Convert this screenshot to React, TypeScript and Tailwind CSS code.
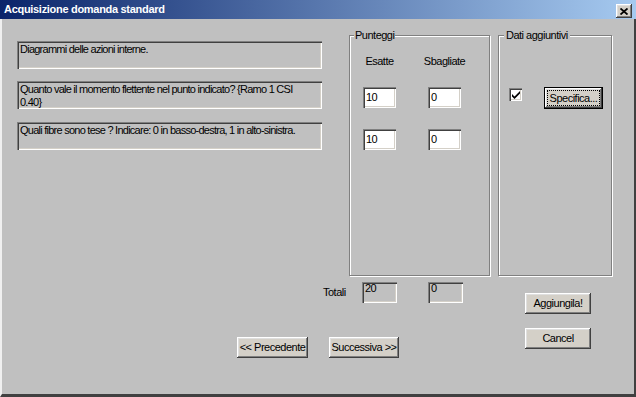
const sunken =
  "shadow-[inset_1px_1px_0_#808080,inset_2px_2px_0_#404040,inset_-1px_-1px_0_#ffffff,inset_-2px_-2px_0_#d4d0c8]"
const raised =
  "shadow-[inset_-1px_-1px_0_#404040,inset_1px_1px_0_#ffffff,inset_-2px_-2px_0_#808080,inset_2px_2px_0_#dfdfdf]"
const etched = "border border-[#808080] shadow-[inset_1px_1px_0_#ffffff,1px_1px_0_#ffffff]"

const Button = ({ label, className = "" }: { label: string; className?: string }) => (
  <button className={`bg-[#d4d0c8] ${raised} flex items-center justify-center ${className}`}>
    {label}
  </button>
)

const Field = ({ value, white = true }: { value: string; white?: boolean }) => (
  <div
    className={`${white ? "bg-white items-center" : "bg-[#c0c0c0] items-start"} ${sunken} flex pl-[3px] pt-0 h-[21px]`}
  >
    {value}
  </div>
)

const App = () => {
  return (
    <div className="w-[636px] h-[397px] bg-[#c0c0c0] flex flex-col overflow-hidden font-['Liberation_Sans',Arial,sans-serif] text-[11px] leading-[13px] text-black tracking-[-0.5px]">
      {/* Title bar */}
      <div className="h-[19px] shrink-0 flex items-center justify-between pl-[4px] pr-[4px] bg-[linear-gradient(to_right,#0a246a,#a6caf0)]">
        <span className="text-white font-bold text-[11px] tracking-[-0.3px]">
          Acquisizione domanda standard
        </span>
        <div className={`w-[16px] h-[14px] mt-[3px] bg-[#d4d0c8] ${raised} flex items-center justify-center`}>
          <svg width="8" height="7" viewBox="0 0 8 7">
            <path d="M0.5 0.5 L7.5 6.5 M7.5 0.5 L0.5 6.5" stroke="#000" strokeWidth="1.8" />
          </svg>
        </div>
      </div>

      {/* Body */}
      <div className="flex-1 flex flex-col border-l-2 border-l-[#f0f0f0] border-r-2 border-r-[#404040] border-b-[3px] border-b-[#404040]">
        <div className="flex items-start">
          {/* Questions */}
          <div className="ml-[15px] mt-[22px] w-[305px] flex flex-col tracking-[-0.75px]">
            <div className={`h-[28px] ${sunken} pl-[3px] pt-[2px]`}>Diagrammi delle azioni interne.</div>
            <div className={`h-[28px] mt-[12px] ${sunken} pl-[3px] pt-[2px]`}>
              Quanto vale il momento flettente nel punto indicato? {"{"}Ramo 1 CSI
              <br />
              0.40{"}"}
            </div>
            <div className={`h-[28px] mt-[13px] ${sunken} pl-[3px] pt-[2px]`}>
              Quali fibre sono tese ? Indicare: 0 in basso-destra, 1 in alto-sinistra.
            </div>
          </div>

          {/* Punteggi */}
          <fieldset className={`ml-[27px] mt-[10px] w-[141px] h-[247px] ${etched}`}>
            <legend className="ml-[4px] px-[1px] bg-[#c0c0c0]">Punteggi</legend>
            <div className="pl-[13px] mt-[13px] grid grid-cols-[33px_33px] gap-x-[32px]">
              <div className="flex justify-center whitespace-nowrap">Esatte</div>
              <div className="flex justify-center whitespace-nowrap">Sbagliate</div>
              <div className="mt-[19px]">
                <Field value="10" />
              </div>
              <div className="mt-[19px]">
                <Field value="0" />
              </div>
              <div className="mt-[21px]">
                <Field value="10" />
              </div>
              <div className="mt-[21px]">
                <Field value="0" />
              </div>
            </div>
          </fieldset>

          {/* Dati aggiuntivi */}
          <fieldset className={`ml-[8px] mt-[10px] w-[114px] h-[247px] ${etched}`}>
            <legend className="ml-[5px] px-[2px] bg-[#c0c0c0]">Dati aggiuntivi</legend>
            <div className="pl-[10px] mt-[45px] flex items-start">
              <div className={`mt-[1px] w-[13px] h-[13px] bg-white ${sunken} flex items-center justify-center`}>
                <svg width="8" height="8" viewBox="0 0 8 8">
                  <path d="M0 3 L0 5.5 L2.5 8 L8 2.5 L8 0 L2.5 5.5 Z" fill="#000" />
                </svg>
              </div>
              <button
                className={`ml-[22px] w-[59px] h-[22px] bg-[#d4d0c8] border border-black ${raised} p-[2px] flex`}
              >
                <span className="flex-1 border border-dotted border-black flex items-center justify-center">
                  Specifica...
                </span>
              </button>
            </div>
          </fieldset>
        </div>

        {/* Bottom area */}
        <div className="flex items-start">
          <div className="w-[497px] flex flex-col">
            <div className="mt-[6px] pl-[321px] flex items-center">
              <span className="w-[39px]">Totali</span>
              <div className="w-[35px]">
                <Field value="20" white={false} />
              </div>
              <div className="w-[35px] ml-[31px]">
                <Field value="0" white={false} />
              </div>
            </div>
            <div className="mt-[34px] pl-[235px] flex">
              <Button label="<< Precedente" className="w-[71px] h-[21px]" />
              <Button label="Successiva >>" className="ml-[21px] w-[70px] h-[21px]" />
            </div>
          </div>
          <div className="ml-[26px] mt-[17px] flex flex-col">
            <Button label="Aggiungila!" className="w-[66px] h-[21px]" />
            <Button label="Cancel" className="mt-[14px] w-[66px] h-[21px]" />
          </div>
        </div>
      </div>
    </div>
  )
}

export default App
